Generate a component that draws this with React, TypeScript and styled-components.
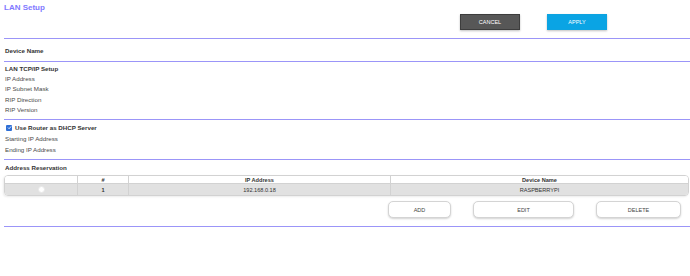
import React from "react";
import styled, { createGlobalStyle } from "styled-components";

const GlobalStyle = createGlobalStyle`
  html, body {
    margin: 0;
    padding: 0;
    background: #fff;
  }
  body {
    font-family: "Liberation Sans", Arial, sans-serif;
    color: #333;
  }
`;

const Page = styled.div`
  width: 690px;
  height: 276px;
  padding-left: 4px;
  box-sizing: border-box;
  overflow: hidden;
`;

const Header = styled.div`
  display: flex;
  justify-content: space-between;
  align-items: flex-start;
  height: 38px;
`;

const Title = styled.h1`
  margin: 0;
  padding-top: 3px;
  font-size: 8px;
  line-height: 10px;
  font-weight: bold;
  color: #7f79ff;
`;

const HeaderActions = styled.div`
  display: flex;
  gap: 27px;
  margin-top: 14px;
  margin-right: 83px;
`;

const HeaderButton = styled.button<{ $primary?: boolean }>`
  width: 60px;
  height: 16px;
  padding: 0;
  border: 1px solid ${(p) => (p.$primary ? "#0ea3e0" : "#3d3d3d")};
  background: ${(p) => (p.$primary ? "#0aa4e4" : "#575757")};
  color: #fff;
  font-family: "Liberation Sans", Arial, sans-serif;
  font-size: 5.5px;
  text-transform: uppercase;
  box-shadow: 0 1px 2px rgba(0, 0, 0, 0.25);
  cursor: pointer;
`;

const Divider = styled.div`
  height: 1px;
  background: #9b95f8;
`;

const Section = styled.section<{ $top?: number; $bottom?: number }>`
  padding-top: ${(p) => p.$top ?? 2}px;
  padding-bottom: ${(p) => p.$bottom ?? 4}px;
`;

const SectionLabel = styled.div<{ $h?: number }>`
  height: ${(p) => p.$h ?? 9}px;
  display: flex;
  align-items: center;
  padding-left: 1px;
  font-size: 6.2px;
  font-weight: bold;
  color: #333;
`;

const FieldRow = styled.div<{ $h?: number }>`
  height: ${(p) => p.$h ?? 10.5}px;
  display: flex;
  align-items: center;
  padding-left: 1px;
  font-size: 6.2px;
  color: #4a4a4a;
`;

const CheckRow = styled.label`
  height: 11px;
  display: flex;
  align-items: center;
  gap: 3px;
  padding-left: 2px;
  font-size: 6.2px;
  font-weight: bold;
  color: #333;
`;

const Check = styled.span`
  width: 6px;
  height: 6px;
  border-radius: 1px;
  background: #2f6fd6;
  display: flex;
  align-items: center;
  justify-content: center;
`;

const Table = styled.div`
  margin-top: 3px;
  margin-right: 1px;
  border: 1px solid #d2d2d2;
  border-radius: 4px;
  overflow: hidden;
  box-shadow: -1px 1px 2px rgba(0, 0, 0, 0.08);
`;

const TableRow = styled.div<{ $head?: boolean }>`
  display: grid;
  grid-template-columns: 72px 51px 262px 1fr;
  height: ${(p) => (p.$head ? 7 : 11)}px;
  background: ${(p) => (p.$head ? "#fff" : "#e1e1e1")};
  border-top: ${(p) => (p.$head ? "none" : "1px solid #d2d2d2")};
`;

const Cell = styled.div<{ $head?: boolean }>`
  display: flex;
  align-items: center;
  justify-content: center;
  border-left: 1px solid #d2d2d2;
  font-size: 5.6px;
  font-weight: ${(p) => (p.$head ? "bold" : "normal")};
  color: #333;
  &:first-child {
    border-left: none;
  }
`;

const Radio = styled.span`
  width: 5px;
  height: 5px;
  border-radius: 50%;
  background: #fff;
  border: 1px solid #e8e8e8;
`;

const Actions = styled.div`
  display: flex;
  justify-content: flex-end;
  gap: 22px;
  margin-top: 5px;
  padding-right: 9px;
`;

const ActionButton = styled.button<{ $w: number }>`
  width: ${(p) => p.$w}px;
  height: 17px;
  padding: 0;
  border: 1px solid #d4d4d4;
  border-radius: 5px;
  background: #fff;
  color: #444;
  font-family: "Liberation Sans", Arial, sans-serif;
  font-size: 5.5px;
  text-transform: uppercase;
  box-shadow: 0 1px 2px rgba(0, 0, 0, 0.18);
  cursor: pointer;
`;

export default function App() {
  return (
    <Page>
      <GlobalStyle />
      <Header>
        <Title>LAN Setup</Title>
        <HeaderActions>
          <HeaderButton>Cancel</HeaderButton>
          <HeaderButton $primary>Apply</HeaderButton>
        </HeaderActions>
      </Header>
      <Divider />

      <Section $top={7} $bottom={6}>
        <SectionLabel>Device Name</SectionLabel>
      </Section>
      <Divider />

      <Section $top={2} $bottom={4}>
        <SectionLabel>LAN TCP/IP Setup</SectionLabel>
        <FieldRow>IP Address</FieldRow>
        <FieldRow>IP Subnet Mask</FieldRow>
        <FieldRow>RIP Direction</FieldRow>
        <FieldRow>RIP Version</FieldRow>
      </Section>
      <Divider />

      <Section $top={2} $bottom={4}>
        <CheckRow>
          <Check>
            <svg width="5" height="5" viewBox="0 0 10 10">
              <path d="M2 5.2 L4.2 7.4 L8.2 2.8" fill="none" stroke="#fff" strokeWidth="1.8" />
            </svg>
          </Check>
          Use Router as DHCP Server
        </CheckRow>
        <FieldRow $h={11}>Starting IP Address</FieldRow>
        <FieldRow $h={11}>Ending IP Address</FieldRow>
      </Section>
      <Divider />

      <Section $top={2} $bottom={8}>
        <SectionLabel $h={10}>Address Reservation</SectionLabel>
        <Table>
          <TableRow $head>
            <Cell $head />
            <Cell $head>#</Cell>
            <Cell $head>IP Address</Cell>
            <Cell $head>Device Name</Cell>
          </TableRow>
          <TableRow>
            <Cell>
              <Radio />
            </Cell>
            <Cell $head>1</Cell>
            <Cell>192.168.0.18</Cell>
            <Cell>RASPBERRYPI</Cell>
          </TableRow>
        </Table>
        <Actions>
          <ActionButton $w={63}>Add</ActionButton>
          <ActionButton $w={101}>Edit</ActionButton>
          <ActionButton $w={85}>Delete</ActionButton>
        </Actions>
      </Section>
      <Divider />
    </Page>
  );
}
